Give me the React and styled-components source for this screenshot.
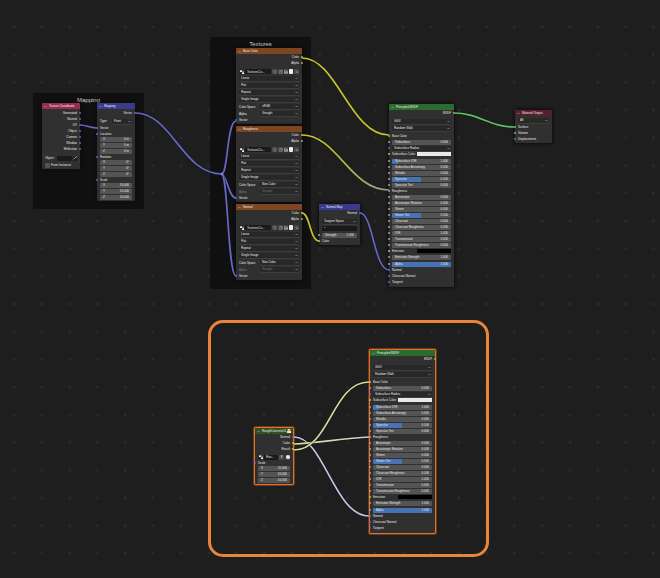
import React from "react";
import styled, { createGlobalStyle } from "styled-components";

const GlobalStyle = createGlobalStyle`
  * { box-sizing: border-box; }
  body {
    margin: 0;
    background: #1e1e1e;
    color: #e8e8e8;
    font-family: "Liberation Sans", Arial, sans-serif;
  }
  button, input, select { font: inherit; color: inherit; margin: 0; padding: 0; border: 0; }
`;

const C = {
  yellow: "#c7c729",
  grey: "#a1a1a1",
  blue: "#6363c7",
  green: "#63c763",
  orange: "#e8853a",
};

const Canvas = styled.main`
  position: relative;
  min-height: 100vh;
  overflow: hidden;
  background: #1e1e1e;
  font-size: 3px;
  line-height: 6px;
`;

const Layer = styled.svg`
  position: absolute;
  inset: 0;
  width: 100%;
  height: 100%;
  pointer-events: none;
`;

const Frame = styled.section`
  position: absolute;
  left: ${(p) => p.$x}px;
  top: ${(p) => p.$y}px;
  width: ${(p) => p.$w}px;
  height: ${(p) => p.$h}px;
  background: #101010;
  border-radius: 1px;
  text-align: center;
`;

const FrameTitle = styled.h2`
  margin: 3px 0 0;
  font-size: 6px;
  line-height: 8px;
  font-weight: 400;
  color: #d0d0d0;
`;

const Annotation = styled.div`
  position: absolute;
  left: 208px;
  top: 320px;
  width: 281px;
  height: 237px;
  border: 3px solid ${C.orange};
  border-radius: 15px;
`;

const NodeBox = styled.article`
  position: absolute;
  left: ${(p) => p.$x}px;
  top: ${(p) => p.$y}px;
  width: ${(p) => p.$w}px;
  padding-bottom: ${(p) => p.$pb ?? 1}px;
  background: #303030;
  border-radius: 1px;
  box-shadow: ${(p) =>
    p.$selected ? "0 0 0 1px #e0702a, 0 0 0 2px #6e3a1a" : "0 0 3px 1px #0d0d0d"};
`;

const Header = styled.header`
  display: flex;
  align-items: center;
  gap: 2px;
  height: 6px;
  padding: 0 2px;
  border-radius: 1px 1px 0 0;
  background: ${(p) => p.$color};
  color: #f0f0f0;
  white-space: nowrap;
`;

const Toggle = styled.button`
  display: flex;
  width: 3px;
  height: 3px;
  background: none;
`;

const Title = styled.h3`
  flex: 1;
  min-width: 0;
  margin: 0;
  font-size: 3px;
  font-weight: 400;
`;

const RowBox = styled.div`
  position: relative;
  display: flex;
  align-items: center;
  justify-content: ${(p) => (p.$out ? "flex-end" : "flex-start")};
  height: ${(p) => p.$h ?? 6}px;
  margin-top: ${(p) => p.$mt ?? 0}px;
  padding: 0 3px;
  gap: 1px;
  white-space: nowrap;
  color: ${(p) => (p.$dim ? "#777777" : "inherit")};
`;

const Socket = styled.i`
  position: absolute;
  ${(p) => (p.$out ? "right: -1px;" : "left: -1px;")}
  top: 2px;
  width: 2px;
  height: 2px;
  border-radius: 1px;
  background: ${(p) => p.$color};
`;

const Field = styled.label`
  flex: 1;
  display: flex;
  align-items: center;
  justify-content: space-between;
  min-width: 0;
  height: ${(p) => (p.$fluid ? "auto" : "5px")};
  line-height: 5px;
  padding: 0 3px;
  border-radius: 1px;
  background: linear-gradient(
    90deg,
    #4772b3 ${(p) => p.$fill ?? 0}%,
    #545454 ${(p) => p.$fill ?? 0}%
  );
`;

const Value = styled.input`
  width: 14px;
  height: 5px;
  background: none;
  text-align: right;
  outline: none;
`;

const Triple = styled.div`
  display: grid;
  grid-auto-rows: 1fr;
  gap: 1px;
  height: 16px;
  margin: 0 3px 1px;
`;

const SelectWrap = styled.span`
  position: relative;
  display: flex;
  flex: 1;
  min-width: 0;
`;

const Select = styled.select`
  appearance: none;
  width: 100%;
  height: 5px;
  line-height: 5px;
  padding: 0 2px;
  background: #282828;
  border-radius: 1px;
  outline: 0;
  box-shadow: 0 1px 0 #3d3d3d;
`;

const Chevron = styled.svg`
  position: absolute;
  right: 1px;
  top: 1px;
  width: 3px;
  height: 3px;
`;

const Swatch = styled.button`
  width: 34px;
  height: 4px;
  margin-left: auto;
  background: ${(p) => p.$color};
`;

const DarkInput = styled.input`
  flex: 1;
  min-width: 0;
  height: 5px;
  padding: 0 2px;
  background: #1a1a1a;
  border-radius: 1px;
  outline: none;
`;

const Check = styled.input`
  appearance: none;
  width: 5px;
  height: 5px;
  border-radius: 1px;
  background: #545454;
`;

const Caption = styled.label`
  width: ${(p) => (p.$w ? `${p.$w}px` : "auto")};
`;

const IconButton = styled.button`
  display: flex;
  flex: none;
  width: ${(p) => p.$w ?? 5}px;
  height: 5px;
  align-items: center;
  justify-content: center;
  background: ${(p) => p.$bg ?? "#4a4a4a"};
  border-radius: 1px;
`;

const Glyph = styled.svg`
  flex: none;
  width: 4px;
  height: 4px;
`;

const Arrow = () => (
  <svg viewBox="0 0 6 6" width="3" height="3" aria-hidden="true">
    <path d="M1 2l2 2 2-2" fill="none" stroke="#c8c8c8" strokeWidth="1" />
  </svg>
);

function Icon({ kind }) {
  const stroke = { fill: "none", stroke: "#dcdcdc", strokeWidth: 1.4 };
  return (
    <Glyph viewBox="0 0 12 12" aria-hidden="true">
      {kind === "shield" && <path d="M2 2h8v4q0 3-4 5q-4-2-4-5z" {...stroke} stroke="#9a9a9a" />}
      {kind === "copy" && <path d="M1 4h7v7H1zM4 4V1h7v7H8" {...stroke} stroke="#9a9a9a" />}
      {kind === "open" && <path d="M1 10V2h4l1 2h5v6zM1 7h10" {...stroke} />}
      {kind === "close" && <path d="M3 3l6 6M9 3L3 9" {...stroke} stroke="#9a9a9a" />}
      {kind === "drop" && <path d="M2 10l5-5M6 2l4 4M8 4l3-3" {...stroke} strokeWidth={2} />}
      {kind === "nodes" && (
        <g fill="#ececec">
          <rect x="0" y="1" width="6" height="5" />
          <rect x="6" y="7" width="6" height="5" />
          <path d="M6 3h4v4" {...stroke} />
        </g>
      )}
      {kind === "group" && (
        <g fill="#f3e3c4">
          <rect x="2" y="0" width="8" height="5" />
          <rect x="0" y="6" width="12" height="6" />
        </g>
      )}
      {kind === "sphere" && <circle cx="6" cy="6" r="6" fill="#e6eefc" />}
    </Glyph>
  );
}

function Node({ title, color, badge, children, ...box }) {
  return (
    <NodeBox {...box} aria-label={title}>
      <Header $color={color}>
        <Toggle aria-label={`Collapse ${title}`}>
          <Arrow />
        </Toggle>
        <Title>{title}</Title>
        {badge}
      </Header>
      {children}
    </NodeBox>
  );
}

function Out({ name, color, mt }) {
  return (
    <RowBox $out $mt={mt}>
      {name}
      <Socket $out $color={color} />
    </RowBox>
  );
}

function In({ name, color, mt, children }) {
  return (
    <RowBox $mt={mt}>
      <Socket $color={color} />
      {name && <span>{name}</span>}
      {children}
    </RowBox>
  );
}

function Num({ name, value, fill, fluid }) {
  return (
    <Field $fill={fill} $fluid={fluid}>
      <span>{name}</span>
      <Value defaultValue={value} />
    </Field>
  );
}

function Drop({ value, label }) {
  return (
    <SelectWrap>
      <Select defaultValue={value} aria-label={label ?? value}>
        <option>{value}</option>
      </Select>
      <Chevron viewBox="0 0 6 6" aria-hidden="true">
        <path d="M1 2l2 2 2-2" fill="none" stroke="#bdbdbd" />
      </Chevron>
    </SelectWrap>
  );
}

function Vector3({ values }) {
  return (
    <Triple>
      {values.map((v, i) => (
        <Num key={i} name={"XYZ"[i]} value={v} fluid />
      ))}
    </Triple>
  );
}

const PRINCIPLED = [
  ["Base Color", "socket", C.yellow],
  ["Subsurface", "0.000", C.grey],
  ["Subsurface Radius", "menu", C.blue],
  ["Subsurface Color", "swatch", C.yellow, "#e9e9e9"],
  ["Subsurface IOR", "1.400", C.grey, 11, 1],
  ["Subsurface Anisotropy", "0.000", C.grey],
  ["Metallic", "0.000", C.grey],
  ["Specular", "0.500", C.grey, 49],
  ["Specular Tint", "0.000", C.grey],
  ["Roughness", "socket", C.grey],
  ["Anisotropic", "0.000", C.grey],
  ["Anisotropic Rotation", "0.000", C.grey],
  ["Sheen", "0.000", C.grey],
  ["Sheen Tint", "0.500", C.grey, 49],
  ["Clearcoat", "0.000", C.grey],
  ["Clearcoat Roughness", "0.030", C.grey],
  ["IOR", "1.450", C.grey],
  ["Transmission", "0.000", C.grey],
  ["Transmission Roughness", "0.000", C.grey],
  ["Emission", "swatch", C.yellow, "#000000"],
  ["Emission Strength", "1.000", C.grey],
  ["Alpha", "1.000", C.grey, 100, 1],
  ["Normal", "socket", C.blue],
  ["Clearcoat Normal", "socket", C.blue],
  ["Tangent", "socket", C.blue],
];

function Principled(props) {
  return (
    <Node title="Principled BSDF" color="#2c6a2e" $w={65} $pb={2} {...props}>
      <Out name="BSDF" color={C.green} />
      <RowBox $mt={2}><Drop value="GGX" /></RowBox>
      <RowBox $mt={1}><Drop value="Random Walk" /></RowBox>
      <RowBox $h={2} />
      {PRINCIPLED.map(([name, kind, color, extra, mt], i) => {
        if (kind === "socket") return <In key={i} name={name} color={color} />;
        if (kind === "menu") return <In key={i} color={color}><Drop value={name} /></In>;
        if (kind === "swatch")
          return (
            <In key={i} name={name} color={color}>
              <Swatch $color={extra} aria-label={name} />
            </In>
          );
        return (
          <In key={i} color={color} mt={mt}>
            <Num name={name} value={kind} fill={extra} />
          </In>
        );
      })}
    </Node>
  );
}

function Texture({ title, space, dimAlpha, y }) {
  return (
    <Node title={title} color="#7d4621" $x={236} $y={y} $w={66}>
      <Out name="Color" color={C.yellow} />
      <Out name="Alpha" color={C.grey} />
      <RowBox $h={7} $mt={2}>
        <IconButton $bg="#282828" aria-label="Browse image"><Icon kind="nodes" /></IconButton>
        <DarkInput defaultValue="TexturesCo..." aria-label="Image name" />
        <IconButton aria-label="Fake user"><Icon kind="shield" /></IconButton>
        <IconButton aria-label="New image"><Icon kind="copy" /></IconButton>
        <IconButton $w={4} aria-label="Open image"><Icon kind="open" /></IconButton>
        <IconButton $w={4} $bg="#ededed" aria-label="Pack image" />
        <IconButton aria-label="Unlink image"><Icon kind="close" /></IconButton>
      </RowBox>
      {["Linear", "Flat", "Repeat", "Single Image"].map((v) => (
        <RowBox $h={7} key={v}><Drop value={v} /></RowBox>
      ))}
      <RowBox $h={7}>
        <Caption $w={20}>Color Space</Caption>
        <Drop value={space} label="Color Space" />
      </RowBox>
      <RowBox $h={7} $dim={dimAlpha}>
        <Caption $w={20}>Alpha</Caption>
        <Drop value="Straight" label="Alpha" />
      </RowBox>
      <In name="Vector" color={C.blue} />
    </Node>
  );
}

const LINKS = [
  ["M80 125C86 125 91 128 97 128", "#6666c4"],
  ["M135 113C172 113 182 174 222 174", "#6666c4"],
  ["M222 174C228 172 227 121 236 121", "#6666c4"],
  ["M222 174C227 176 229 198 236 198", "#6666c4"],
  ["M222 174C228 178 228 276 236 276", "#6666c4"],
  ["M302 58C337 58 350 135 389 135", "#c2c232"],
  ["M302 135C337 135 350 190 389 190", "url(#yellowToGrey)"],
  ["M302 213C310 213 310 241 319 241", "#c2c232"],
  ["M360 213C373 213 374 270 389 270", "#6666c4"],
  ["M454 113C478 113 490 127 514 127", "#5fbd62"],
  ["M294 437C324 437 334 516 369 516", "#c3c3e4"],
  ["M294 444C320 443 342 438 369 437", "url(#paleFade)"],
  ["M294 450C330 450 332 382 369 382", "#d9d9a0"],
];

export default function App() {
  return (
    <Canvas>
      <GlobalStyle />
      <Layer aria-hidden="true">
        <defs>
          <pattern id="dots" y="13" width="27.8" height="27.7" patternUnits="userSpaceOnUse">
            <circle cx="14" cy="14" r="1.4" fill="#2b2b2b" />
          </pattern>
        </defs>
        <rect width="100%" height="100%" fill="url(#dots)" />
      </Layer>

      <Frame $x={33} $y={93} $w={111} $h={116}>
        <FrameTitle>Mapping</FrameTitle>
      </Frame>
      <Frame $x={210} $y={37} $w={101} $h={252}>
        <FrameTitle>Textures</FrameTitle>
      </Frame>

      <Node title="Texture Coordinate" color="#982c4c" $x={42} $y={103} $w={38}>
        <RowBox $h={1} />
        {["Generated", "Normal", "UV", "Object", "Camera", "Window", "Reflection"].map((n) => (
          <Out key={n} name={n} color={C.blue} />
        ))}
        <RowBox $mt={3}>
          <Caption htmlFor="tc-object" $w={11}>Object:</Caption>
          <DarkInput id="tc-object" />
          <IconButton $w={4} $bg="#1a1a1a" aria-label="Pick object"><Icon kind="drop" /></IconButton>
        </RowBox>
        <RowBox $mt={1}>
          <Check type="checkbox" id="tc-inst" />
          <Caption htmlFor="tc-inst">From Instancer</Caption>
        </RowBox>
      </Node>

      <Node title="Mapping" color="#3b3b8c" $x={97} $y={103} $w={38}>
        <RowBox $h={1} />
        <Out name="Vector" color={C.blue} />
        <RowBox $mt={2}>
          <Caption $w={11}>Type:</Caption>
          <Drop value="Point" label="Type" />
        </RowBox>
        <In name="Vector" color={C.blue} mt={1} />
        <In name="Location" color={C.blue} />
        <Vector3 values={["0 m", "0 m", "0 m"]} />
        <In name="Rotation" color={C.blue} />
        <Vector3 values={["0°", "0°", "0°"]} />
        <In name="Scale" color={C.blue} />
        <Vector3 values={["10.000", "10.000", "10.000"]} />
      </Node>

      <Texture title="Base Color" space="sRGB" y={48} />
      <Texture title="Roughness" space="Non-Color" dimAlpha y={126} />
      <Texture title="Normal" space="Non-Color" dimAlpha y={204} />

      <Node title="Normal Map" color="#3b3b8c" $x={319} $y={204} $w={41}>
        <Out name="Normal" color={C.blue} />
        <RowBox $mt={2}><Drop value="Tangent Space" /></RowBox>
        <RowBox $mt={1}><DarkInput defaultValue="•" aria-label="UV map" /></RowBox>
        <In color={C.grey} mt={1}><Num name="Strength" value="1.000" /></In>
        <In name="Color" color={C.yellow} />
      </Node>

      <Principled $x={389} $y={104} />

      <Node title="Material Output" color="#571f2b" $x={515} $y={110} $w={37}>
        <RowBox $mt={1} $h={7}><Drop value="All" /></RowBox>
        <In name="Surface" color={C.green} />
        <In name="Volume" color={C.green} />
        <In name="Displacement" color={C.blue} />
      </Node>

      <Annotation />

      <Node
        title="RoughConcrete01"
        color="#33511f"
        $x={255}
        $y={428}
        $w={38}
        $selected
        badge={<Icon kind="group" />}
      >
        <Out name="Normal" color={C.blue} />
        <Out name="Color" color={C.yellow} />
        <Out name="Result" color={C.yellow} />
        <RowBox $mt={2}>
          <IconButton $bg="#282828" aria-label="Browse group"><Icon kind="nodes" /></IconButton>
          <DarkInput defaultValue="Rou..." aria-label="Group name" />
          <IconButton aria-label="Users">8</IconButton>
          <IconButton aria-label="Fake user"><Icon kind="sphere" /></IconButton>
        </RowBox>
        <In name="Scale" color={C.blue} />
        <Vector3 values={["10.000", "10.000", "10.000"]} />
      </Node>

      <Principled $x={370} $y={350} $selected />

      <Layer aria-hidden="true">
        <defs>
          <linearGradient id="yellowToGrey">
            <stop offset="0.3" stopColor="#c2c232" />
            <stop offset="1" stopColor="#9a9a9a" />
          </linearGradient>
          <linearGradient id="paleFade">
            <stop offset="0" stopColor="#dcdc98" />
            <stop offset="1" stopColor="#d0d0d0" />
          </linearGradient>
        </defs>
        {LINKS.map(([d, color]) => (
          <g key={d} fill="none">
            <path d={d} stroke="#111111" strokeWidth="2.8" opacity="0.6" />
            <path d={d} stroke={color} strokeWidth="1.7" />
          </g>
        ))}
        <circle cx="222" cy="174" r="1.4" fill="#8484d8" />
      </Layer>
    </Canvas>
  );
}
